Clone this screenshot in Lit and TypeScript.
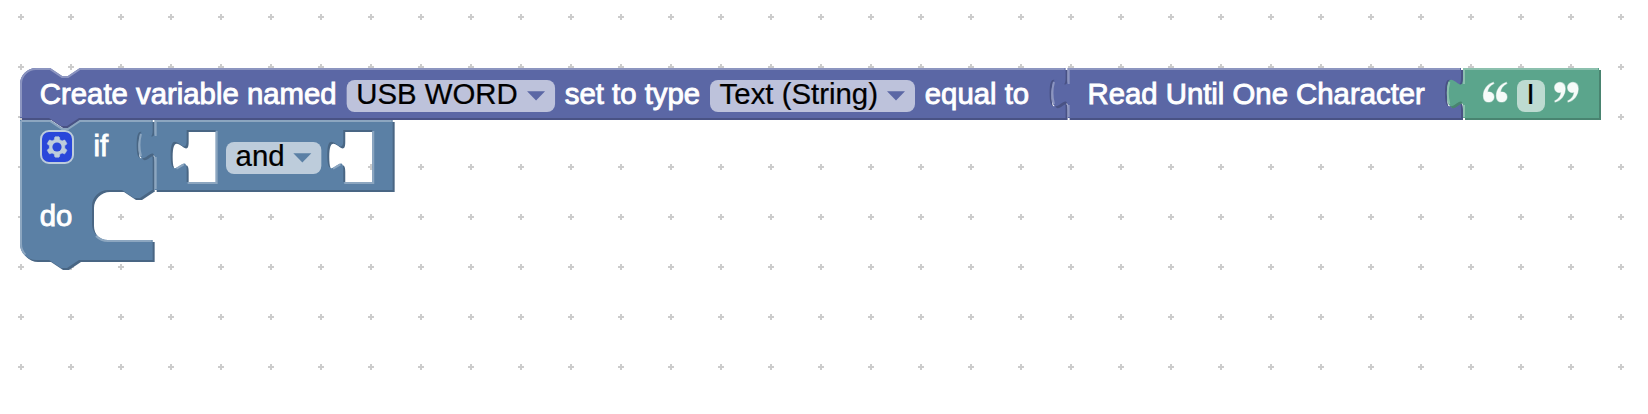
import { LitElement, html, svg, css } from "lit";
import { customElement } from "lit/decorators.js";

// All block geometry is in workspace units; the canvas is drawn at 2x zoom.
const NOTCH = "l 6,4 3,0 6,-4";
const NOTCH_BACK = "l -6,4 -3,0 -6,-4";
const TAB_DOWN = "v 5 c 0,10 -8,-8 -8,7.5 s 8,-2.5 8,7.5";
const TAB_LEFT = "V 20 c 0,-10 -8,8 -8,-7.5 s 8,2.5 8,-7.5 z";

const GRID = Array.from({ length: 33 * 8 }, (_, i) => {
  const x = 10.5 + (i % 33) * 25;
  const y = 8.5 + Math.floor(i / 33) * 25;
  return `M ${x - 1.5},${y} h 3 M ${x},${y - 1.5} v 3`;
}).join(" ");

interface Palette {
  fill: string;
  light: string;
  dark: string;
}
const PURPLE: Palette = { fill: "#5b67a5", light: "#8c95c0", dark: "#495284" };
const BLUE: Palette = { fill: "#5b80a5", light: "#8ca6c0", dark: "#496684" };
const GREEN: Palette = { fill: "#5ba58c", light: "#8cc0ae", dark: "#498470" };

const block = (x: number, y: number, p: Palette, outline: string, highlight: string, body: unknown) => svg`
  <g transform="translate(${x},${y})">
    <path d=${outline} fill=${p.dark} fill-rule="evenodd" transform="translate(1,1)"></path>
    <path d=${outline} fill=${p.fill} fill-rule="evenodd"></path>
    <path d=${highlight} class="light" stroke=${p.light}></path>
    ${body}
  </g>`;

const label = (x: number, y: number, w: number, t: string) =>
  svg`<text class="label" x=${x} y=${y} textLength=${w} lengthAdjust="spacingAndGlyphs">${t}</text>`;

const field = (x: number, y: number, w: number, t: string, tw: number, arrow?: string) => svg`
  <rect class="field" x=${x} y=${y} width=${w} height="16" rx="4"></rect>
  <text class="value" x=${x + 4.8} y=${y + 12} textLength=${tw} lengthAdjust="spacingAndGlyphs">${t}</text>
  ${arrow ? svg`<path d="M ${x + w - 14},${y + 5.6} h 9 l -4.5,4.6 z" fill=${arrow}></path>` : ""}`;

// Highlight of a block whose left side carries an output tab.
const outputLight = (w: number, h: number) =>
  `M 0.5,0.5 H ${w - 0.5} M 0.5,${h - 0.5} V 18.5 m -7.36,-0.5 q -1.52,-5.5 0,-11 m 7.36,1 V 0.5 H 1`;

const glint = (right: number) => `M ${right - 5},19.3 l 3.68,-2.1`;

// Socket for an inline value: body 14.5 x 26 with a tab on its left side.
const socket = (right: number) => `M ${right},5 h -14.5 ${TAB_DOWN} v 6 h 14.5 z`;
const socketLight = (right: number) =>
  `M ${right + 0.5},5.5 v 26 h -14.5 M ${right - 19.6},24.3 l 3.68,-2.1`;

const SET_W = 522.8;
const READ_W = 196.67;
const IF_W = 66.33;
const AND_W = 119;

const GEAR =
  "m4.203,7.296 0,1.368 -0.92,0.677 -0.11,0.41 0.9,1.559 0.41,0.11 1.043,-0.457 1.187,0.683 0.127,1.134 0.3,0.3 1.8,0 0.3,-0.299 0.127,-1.138 1.185,-0.682 1.046,0.458 0.409,-0.11 0.9,-1.559 -0.11,-0.41 -0.92,-0.677 0,-1.366 0.92,-0.677 0.11,-0.41 -0.9,-1.559 -0.409,-0.109 -1.046,0.458 -1.185,-0.682 -0.127,-1.138 -0.3,-0.299 -1.8,0 -0.3,0.3 -0.126,1.135 -1.187,0.682 -1.043,-0.457 -0.41,0.11 -0.899,1.559 0.108,0.409z";

const QUOTE_MARK =
  "M 5,0.2 C 2,1.1 0,3.7 0,6.7 C 0,8.9 1.1,10 2.7,10 C 4.2,10 5.3,8.9 5.3,7.5 C 5.3,6 4.2,5 2.8,5 C 2.5,5 2.2,5.1 2,5.2 C 2.1,3.2 3.2,1.7 5.2,0.7 Z";

const quote = (transform: string) => svg`
  <g class="quote" transform=${transform}>
    <path d=${QUOTE_MARK}></path>
    <path d=${QUOTE_MARK} transform="translate(6.5,0)"></path>
  </g>`;

@customElement("app-root")
export class AppRoot extends LitElement {
  static styles = css`
    :host {
      display: block;
      width: 100%;
      height: 414px;
      overflow: hidden;
      background: #fff;
    }
    svg {
      display: block;
    }
    text {
      font-family: "Liberation Sans", Arial, sans-serif;
      font-size: 14.667px;
    }
    .label {
      fill: #fff;
      stroke: #fff;
      stroke-width: 0.45px;
    }
    .value {
      fill: #000;
      stroke: #000;
      stroke-width: 0.12px;
    }
    .field {
      fill: #fff;
      fill-opacity: 0.6;
    }
    .light {
      fill: none;
      stroke-width: 1px;
    }
    .grid {
      stroke: #ccc;
      stroke-width: 1px;
      shape-rendering: crispEdges;
    }
    .quote {
      fill: #fff;
      fill-opacity: 0.95;
      stroke: #fff;
      stroke-opacity: 0.5;
      stroke-width: 0.6px;
    }
    .icon-box {
      fill: #2a47da;
      stroke: #bdccdb;
      stroke-width: 1px;
    }
    .icon-gear {
      fill: #bdccdb;
      stroke: #bdccdb;
      stroke-width: 0.3px;
    }
    .icon-hole {
      fill: #2a47da;
    }
  `;

  private setBlock() {
    return block(
      10,
      34,
      PURPLE,
      `M 0,8 A 8,8 0 0,1 8,0 H 15 ${NOTCH} H ${SET_W} ${TAB_DOWN} V 25 H 29.5 ${NOTCH_BACK} H 0 z`,
      `M 0.5,24.5 V 8 A 7.5,7.5 0 0,1 8,0.5 H 15 ${NOTCH} H ${SET_W - 0.5} ${glint(SET_W)}`,
      svg`
        ${label(9.9, 18, 148.4, "Create variable named")}
        ${field(163.33, 6, 104.2, "USB WORD", 80.7, PURPLE.fill)}
        ${label(272.4, 18, 67.7, "set to type")}
        ${field(345, 6, 102.5, "Text (String)", 79.2, PURPLE.fill)}
        ${label(452.4, 18, 52.2, "equal to")}
      `
    );
  }

  private readBlock() {
    return block(
      533.83,
      34,
      PURPLE,
      `M 0,0 H ${READ_W} ${TAB_DOWN} V 25 H 0 ${TAB_LEFT}`,
      `${outputLight(READ_W, 25)} ${glint(READ_W)}`,
      label(9.9, 18, 168.7, "Read Until One Character")
    );
  }

  private textBlock() {
    return block(
      731.5,
      34,
      GREEN,
      `M 0,0 H 68 V 25 H 0 ${TAB_LEFT}`,
      outputLight(68, 25),
      svg`
        ${quote("translate(10.2,7)")}
        ${field(27, 6, 14, "I", 4.08)}
        ${quote("translate(57.6,17.2) rotate(180)")}
      `
    );
  }

  private ifBlock() {
    return block(
      10,
      60,
      BLUE,
      `M 0,0 H 15 ${NOTCH} H ${IF_W} ${TAB_DOWN} V 35 H 66 ${NOTCH_BACK} h -7 a 8,8 0 0,0 -8,8 v 9 a 8,8 0 0,0 8,8 H ${IF_W} V 70 H 29.5 ${NOTCH_BACK} H 8 a 8,8 0 0,1 -8,-8 z`,
      `M 0.5,0.5 H 15 ${NOTCH} H ${IF_W - 0.5} ${glint(IF_W)} M 38,58 a 8.5,8.5 0 0,0 6,2.5 H ${IF_W - 0.5} M 2.7,67.3 A 7.5,7.5 0 0,1 0.5,62 V 0.5`,
      svg`
        <g transform="translate(10.5,5.5)">
          <rect class="icon-box" width="16" height="16" rx="4"></rect>
          <path class="icon-gear" d=${GEAR}></path>
          <circle class="icon-hole" cx="8" cy="8" r="2.3"></circle>
        </g>
        ${label(36.7, 17.8, 7.33, "if")}
        ${label(9.9, 53, 16.3, "do")}
      `
    );
  }

  private andBlock() {
    return block(
      77.33,
      60,
      BLUE,
      `M 0,0 H ${AND_W} V 35 H 0 ${TAB_LEFT} ${socket(30.5)} ${socket(108.8)}`,
      `${outputLight(AND_W, 35)} ${socketLight(30.5)} ${socketLight(108.8)}`,
      field(35.67, 11, 47.67, "and", 24.5, BLUE.fill)
    );
  }

  render() {
    return html`<svg width="1648" height="414" viewBox="0 0 824 207">
      <path class="grid" d=${GRID}></path>
      ${this.setBlock()} ${this.ifBlock()} ${this.andBlock()} ${this.readBlock()} ${this.textBlock()}
    </svg>`;
  }
}
